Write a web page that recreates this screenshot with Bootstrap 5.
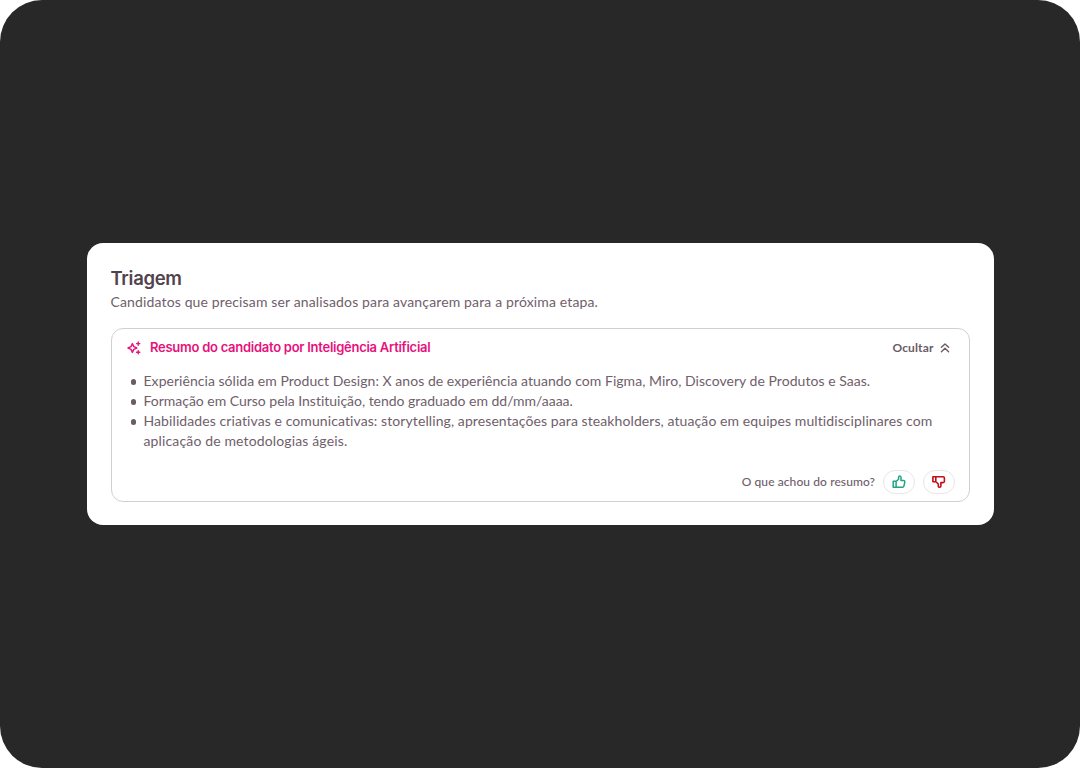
<!DOCTYPE html>
<html lang="pt-BR">
<head>
<meta charset="utf-8">
<meta name="viewport" content="width=device-width, initial-scale=1">
<title>Triagem</title>
<link href="https://cdn.jsdelivr.net/npm/bootstrap@5.3.0/dist/css/bootstrap.min.css" rel="stylesheet">
<style>
body { background: #fff; font-family: Lato, "Open Sans", sans-serif; font-size: 14px; line-height: 20px; color: #6f606b; font-variant-ligatures: none; }
.stage { background: #292829; border-radius: 42px; }
.panel { width: 907px; height: 282px; border-radius: 16px; padding: 24px 24px 23px; }
.display { font-family: Inter, Roboto, sans-serif; font-weight: 600; }
.panel-title { font-size: 18.5px; line-height: 23px; padding-bottom: 2px; color: #51424d; letter-spacing: -.3px; }
.intro { letter-spacing: .14px; }
.summary { border: 1px solid #d5cdd2; border-radius: 12px; height: 174px; padding: 0 14px 7px 15px; }
.summary-head { height: 38px; }
.summary-title { font-size: 13px; line-height: 20px; color: #e6127d; letter-spacing: -.265px; margin-left: 9.5px; padding-bottom: 2px; }
.points { padding: 4px 0 0 17px; }
.points li { position: relative; list-style: none; }
.points li::before { content: ""; position: absolute; left: -13px; top: 8px; width: 5.5px; height: 5.5px; border-radius: 50%; background: #6b5b66; }
.p1 { letter-spacing: .04px; }
.p2 { letter-spacing: -.02px; }
.p3 { letter-spacing: .09px; white-space: nowrap; }
.p4 { letter-spacing: .14px; }
.toggle { font-size: 12px; font-weight: 700; letter-spacing: .12px; color: #6b5b66; padding: 0 4px; gap: 5px; }
.ask { font-size: 12px; font-weight: 500; letter-spacing: .09px; margin-right: -.5px; }
.vote { width: 32px; height: 24px; border: 1px solid #e9e5e8; }
</style>
</head>
<body>
<main class="stage vh-100 d-flex align-items-center justify-content-center">
  <section class="panel bg-white d-flex flex-column">
    <h1 class="panel-title display mb-0">Triagem</h1>
    <p class="intro mb-0">Candidatos que precisam ser analisados para avançarem para a próxima etapa.</p>
    <div class="summary d-flex flex-column mt-auto">
      <div class="summary-head d-flex align-items-center">
        <svg width="14" height="14" viewBox="0 0 14 14" fill="none" stroke="#e6127d" stroke-width="1.4" stroke-linejoin="round" stroke-linecap="round"><path d="M5.4 2.6 6.8 5.6 9.8 7 6.8 8.4 5.4 11.4 4 8.4 1 7 4 5.6ZM11.2 1v3.2M9.6 2.6h3.2M11.2 9.6v3.2M9.6 11.2h3.2"/></svg>
        <h2 class="summary-title display mb-0">Resumo do candidato por Inteligência Artificial</h2>
        <button class="toggle btn border-0 ms-auto d-flex align-items-center" type="button"><span>Ocultar</span>
          <svg width="12" height="12" viewBox="0 0 12 12" fill="none" stroke="currentColor" stroke-width="1.4" stroke-linecap="round" stroke-linejoin="round"><path d="M2.4 5.3 6 1.9l3.6 3.4M2.4 9.7 6 6.3l3.6 3.4"/></svg>
        </button>
      </div>
      <ul class="points mb-0">
        <li><span class="p1">Experiência sólida em Product Design: X anos de experiência atuando com Figma, Miro, Discovery de Produtos e Saas.</span></li>
        <li><span class="p2">Formação em Curso pela Instituição, tendo graduado em dd/mm/aaaa.</span></li>
        <li><span class="p3">Habilidades criativas e comunicativas: storytelling, apresentações para steakholders, atuação em equipes multidisciplinares com</span><br><span class="p4">aplicação de metodologias ágeis.</span></li>
      </ul>
      <div class="d-flex align-items-center justify-content-end gap-2 mt-auto">
        <span class="ask">O que achou do resumo?</span>
        <button class="vote btn rounded-pill p-0 d-flex align-items-center justify-content-center" type="button" aria-label="Gostei">
          <svg width="14" height="14" viewBox="0 0 14 14" fill="none" stroke="#20a584" stroke-width="1.5" stroke-linejoin="round"><path d="M1.2 6.3h2.9v6H1.2ZM4.1 6.5 6.6 4.3V2.3c0-1.8 2.4-1.6 2.4.2v3.1h2.5c1 0 1.5.7 1.3 1.6l-.9 3.9c-.2.8-.7 1.2-1.5 1.2H4.1"/></svg>
        </button>
        <button class="vote btn rounded-pill p-0 d-flex align-items-center justify-content-center" type="button" aria-label="Não gostei">
          <svg width="14" height="14" viewBox="0 0 14 14" fill="none" stroke="#be1118" stroke-width="1.6" stroke-linejoin="round"><path d="M.9 1.7h2.9v5H.9ZM3.8 1.7H11c.9 0 1.4.5 1.4 1.3v3.3c0 .8-.5 1.3-1.3 1.3H8.9v3.2c0 2-2.6 2-2.6.1V9L3.8 6.7"/></svg>
        </button>
      </div>
    </div>
  </section>
</main>
<script src="https://cdn.jsdelivr.net/npm/bootstrap@5.3.0/dist/js/bootstrap.bundle.min.js"></script>
</body>
</html>
